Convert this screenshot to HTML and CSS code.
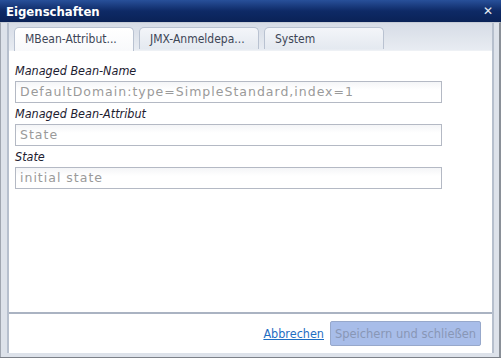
FILE: index.html
```html
<!DOCTYPE html>
<html lang="de">
<head>
    <meta charset="UTF-8">
    <title>Eigenschaften</title>
    <link rel="stylesheet" href="styles.css">
</head>
<body>
    <div class="dialog">
        <div class="titlebar">
            <span class="title">Eigenschaften</span>
            <span class="close">&#x2715;</span>
        </div>
        <div class="frame">
            <div class="panel">
                <div class="tabs">
                    <div class="tab active">MBean-Attribut...</div>
                    <div class="tab">JMX-Anmeldepa...</div>
                    <div class="tab">System</div>
                </div>
                <div class="content">
                    <div class="field">
                        <label>Managed Bean-Name</label>
                        <div class="input">DefaultDomain:type=SimpleStandard,index=1</div>
                    </div>
                    <div class="field">
                        <label>Managed Bean-Attribut</label>
                        <div class="input">State</div>
                    </div>
                    <div class="field">
                        <label>State</label>
                        <div class="input">initial state</div>
                    </div>
                </div>
                <div class="footer">
                    <a href="#" class="cancel">Abbrechen</a>
                    <button class="save" disabled>Speichern und schließen</button>
                </div>
            </div>
        </div>
    </div>
</body>
</html>
```

FILE: styles.css
```css
/* Dialog shell */
body {
    margin: 0;
    background: #fff;
    font-family: "DejaVu Sans Condensed", "DejaVu Sans", sans-serif;
    font-size: 12px;
}

.dialog {
    width: 501px;
    height: 358px;
    display: flex;
    flex-direction: column;
    box-sizing: border-box;
    border-bottom: 1px solid #7c8088;
}

.titlebar {
    height: 22px;
    display: flex;
    align-items: center;
    justify-content: space-between;
    padding: 0 8px 0 6px;
    background: linear-gradient(#28509a, #0e2a66 50%, #0a2257);
    color: #fff;
    flex-shrink: 0;
}

.title {
    font-weight: bold;
    font-size: 13px;
}

.close {
    font-family: "DejaVu Sans", sans-serif;
    font-size: 12px;
    color: #e8ecf4;
}

.frame {
    flex: 1;
    display: flex;
    background: #dde2ea;
    border-left: 1px solid #a0a6b0;
    border-right: 2px solid #8a9098;
    padding: 0 5px 4px 6px;
    border-top: 1px solid #c6ccd6;
}

.panel {
    flex: 1;
    display: flex;
    flex-direction: column;
    background: #fff;
    border-left: 2px solid #b6bfcd;
    border-right: 2px solid #b6bfcd;
}

/* Tabs */
.tabs {
    display: flex;
    gap: 5px;
    padding: 4px 0 0 5px;
    height: 23px;
    background: linear-gradient(#d6dce6, #e8ecf2);
    border-bottom: 1px solid #eef1f5;
}

.tab {
    width: 120px;
    height: 22px;
    line-height: 22px;
    padding-left: 10px;
    box-sizing: border-box;
    border: 1px solid #b9c2d1;
    border-bottom: none;
    border-radius: 5px 5px 0 0;
    background: linear-gradient(#f3f5f9, #e4e9f0);
    color: #3d4656;
    font-size: 12px;
}

.tab.active {
    background: linear-gradient(#fff, #f8f9fb);
    height: 24px;
}

/* Form */
.content {
    flex: 1;
    padding: 12px 50px 0 6px;
    border-bottom: 2px solid #aab3c2;
}

.field label {
    display: block;
    font-style: italic;
    color: #1c2030;
    font-size: 12.5px;
    height: 18px;
}

.field {
    margin-bottom: 3px;
}

.input {
    height: 22px;
    line-height: 20px;
    box-sizing: border-box;
    border: 1px solid #b4b9c4;
    padding-left: 4px;
    color: #9a9a9a;
    background: linear-gradient(#f4f5f7, #fff 40%);
    font-family: "DejaVu Sans", sans-serif;
    font-size: 12.5px;
    letter-spacing: 1px;
}

/* Footer */
.footer {
    height: 39px;
    display: flex;
    align-items: center;
    justify-content: flex-end;
    gap: 6px;
    padding-right: 11px;
}

.cancel {
    color: #1f6ec3;
    font-size: 12.5px;
}

.save {
    height: 25px;
    width: 151px;
    border: 1px solid #97a8cb;
    border-radius: 2px;
    background: #a8bde9;
    color: #8897b6;
    font-family: "DejaVu Sans", sans-serif;
    font-size: 11.5px;
    padding: 0;
}
```
